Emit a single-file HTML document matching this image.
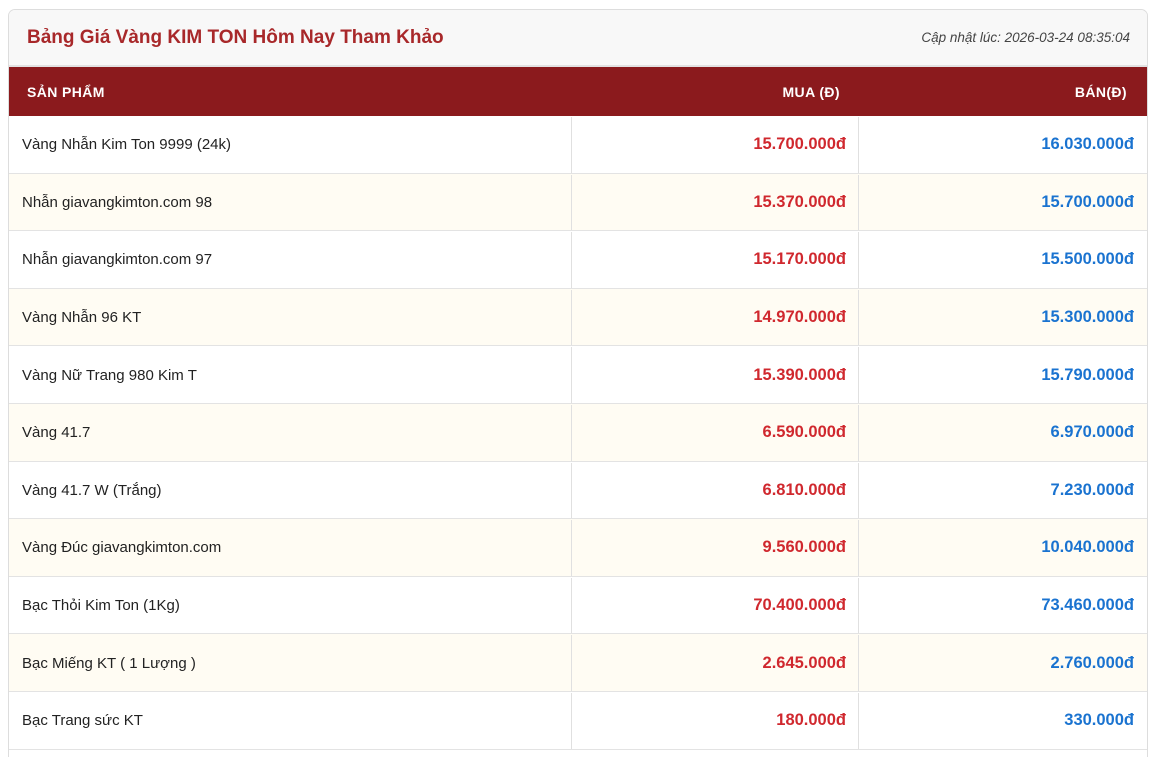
<!DOCTYPE html>
<html><head><meta charset="utf-8"><style>
*{box-sizing:border-box;margin:0;padding:0}
html,body{width:1158px;height:757px;overflow:hidden}
body{background:#fff;font-family:"Liberation Sans",sans-serif;position:relative}
.card{position:absolute;left:8px;top:9px;width:1140px;height:748px;border:1px solid #ddd;border-bottom:none;border-radius:7px 7px 0 0;overflow:hidden;background:#fff}
.hd{height:57px;background:#f8f8f8;border-bottom:2px solid #e2e2e2;display:flex;align-items:center;justify-content:space-between;padding:0 17px 0 18px}
.hd h1{font-size:19px;font-weight:bold;color:#a8282a;margin-top:1px}
.hd span{font-size:13.5px;font-style:italic;color:#444}
.th{height:49px;background:#8b1a1d;color:#fff;font-weight:bold;font-size:14px;display:flex;align-items:center;letter-spacing:.4px}
.row{display:flex;height:57.6px;border-bottom:1px solid #e3e3e3;padding-top:1px}
.row:nth-child(even){background:#fffcf3}
.c1{width:563px;padding-left:13px;display:flex;align-items:center;font-size:15px;color:#222;border-right:1px solid #e0e0e0}
.c2{width:287px;padding-right:12px;display:flex;align-items:center;justify-content:flex-end;font-size:16.5px;font-weight:bold;color:#d0282e;border-right:1px solid #e0e0e0}
.c3{flex:1;padding-right:13px;display:flex;align-items:center;justify-content:flex-end;font-size:16.5px;font-weight:bold;color:#1a73d0}
.th .a{width:563px;padding-left:18px}.th .b{width:287px;text-align:right;padding-right:19px}.th .c{flex:1;text-align:right;padding-right:20px}
</style></head><body><div class="card">
<div class="hd"><h1>Bảng Giá Vàng KIM TON Hôm Nay Tham Khảo</h1><span>Cập nhật lúc: 2026-03-24 08:35:04</span></div>
<div class="th"><div class="a">SẢN PHẨM</div><div class="b">MUA (Đ)</div><div class="c">BÁN(Đ)</div></div>
<div>
<div class="row"><div class="c1">Vàng Nhẫn Kim Ton 9999 (24k)</div><div class="c2">15.700.000đ</div><div class="c3">16.030.000đ</div></div>
<div class="row"><div class="c1">Nhẫn giavangkimton.com 98</div><div class="c2">15.370.000đ</div><div class="c3">15.700.000đ</div></div>
<div class="row"><div class="c1">Nhẫn giavangkimton.com 97</div><div class="c2">15.170.000đ</div><div class="c3">15.500.000đ</div></div>
<div class="row"><div class="c1">Vàng Nhẫn 96 KT</div><div class="c2">14.970.000đ</div><div class="c3">15.300.000đ</div></div>
<div class="row"><div class="c1">Vàng Nữ Trang 980 Kim T</div><div class="c2">15.390.000đ</div><div class="c3">15.790.000đ</div></div>
<div class="row"><div class="c1">Vàng 41.7</div><div class="c2">6.590.000đ</div><div class="c3">6.970.000đ</div></div>
<div class="row"><div class="c1">Vàng 41.7 W (Trắng)</div><div class="c2">6.810.000đ</div><div class="c3">7.230.000đ</div></div>
<div class="row"><div class="c1">Vàng Đúc giavangkimton.com</div><div class="c2">9.560.000đ</div><div class="c3">10.040.000đ</div></div>
<div class="row"><div class="c1">Bạc Thỏi Kim Ton (1Kg)</div><div class="c2">70.400.000đ</div><div class="c3">73.460.000đ</div></div>
<div class="row"><div class="c1">Bạc Miếng KT ( 1 Lượng )</div><div class="c2">2.645.000đ</div><div class="c3">2.760.000đ</div></div>
<div class="row"><div class="c1">Bạc Trang sức KT</div><div class="c2">180.000đ</div><div class="c3">330.000đ</div></div>
</div></div></body></html>
